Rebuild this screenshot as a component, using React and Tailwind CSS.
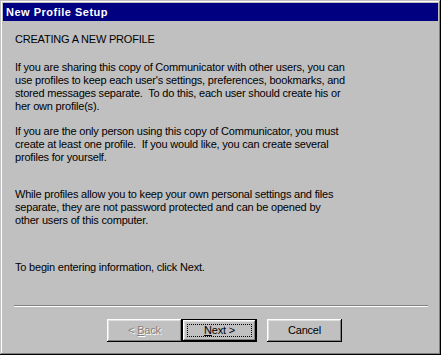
import React from 'react';

// Win95-style "New Profile Setup" wizard page
const raised =
  'shadow-[inset_-1px_-1px_#000,inset_1px_1px_#fff,inset_-2px_-2px_#808080,inset_2px_2px_#dfdfdf]';

const Line = ({ children }) => <span className="block whitespace-nowrap">{children}</span>;

export default function App() {
  return (
    <div
      className="w-[441px] h-[355px] bg-[#c0c0c0] p-[3px] flex flex-col text-black shadow-[inset_-1px_-1px_#000,inset_1px_1px_#c0c0c0,inset_-2px_-2px_#808080,inset_2px_2px_#fff]"
      style={{ fontFamily: '"Liberation Sans", Arial, sans-serif' }}
    >
      <div className="h-[18px] bg-[#000080] text-white font-bold text-[11px] leading-[18px] pl-[3px] tracking-[0.5px]">
        New Profile Setup
      </div>

      <div className="pl-[12px] pt-[12px] text-[11px] leading-[13px] tracking-[-0.2px]">
        <Line>CREATING A NEW PROFILE</Line>
        <div className="mt-[15px]">
          <Line>If you are sharing this copy of Communicator with other users, you can</Line>
          <Line>use profiles to keep each user's settings, preferences, bookmarks, and</Line>
          <Line>stored messages separate.&nbsp; To do this, each user should create his or</Line>
          <Line>her own profile(s).</Line>
        </div>
        <div className="mt-[12px]">
          <Line>If you are the only person using this copy of Communicator, you must</Line>
          <Line>create at least one profile.&nbsp; If you would like, you can create several</Line>
          <Line>profiles for yourself.</Line>
        </div>
        <div className="mt-[24px]">
          <Line>While profiles allow you to keep your own personal settings and files</Line>
          <Line>separate, they are not password protected and can be opened by</Line>
          <Line>other users of this computer.</Line>
        </div>
        <div className="mt-[34px]">
          <Line>To begin entering information, click Next.</Line>
        </div>
      </div>

      <div className="mt-auto pb-[10px]">
        <div className="ml-[11px] mr-[10px] h-[2px] border-t border-t-[#808080] border-b border-b-white" />
        <div className="flex items-start pl-[104px] mt-[12px] text-[11px] tracking-[-0.2px]">
          <button
            disabled
            className={`w-[75px] h-[23px] bg-[#c0c0c0] ${raised} text-[#808080] [text-shadow:1px_1px_0_#fff]`}
          >
            &lt; <span className="underline">B</span>ack
          </button>
          <button className="relative w-[75px] h-[23px] bg-[#c0c0c0] border border-black shadow-[inset_-1px_-1px_#000,inset_1px_1px_#fff,inset_-2px_-2px_#808080,inset_2px_2px_#dfdfdf]">
            <span className="absolute inset-[4px] border border-dotted border-black" />
            <span className="underline">N</span>ext &gt;
          </button>
          <button className={`ml-[10px] w-[75px] h-[23px] bg-[#c0c0c0] ${raised}`}>Cancel</button>
        </div>
      </div>
    </div>
  );
}
